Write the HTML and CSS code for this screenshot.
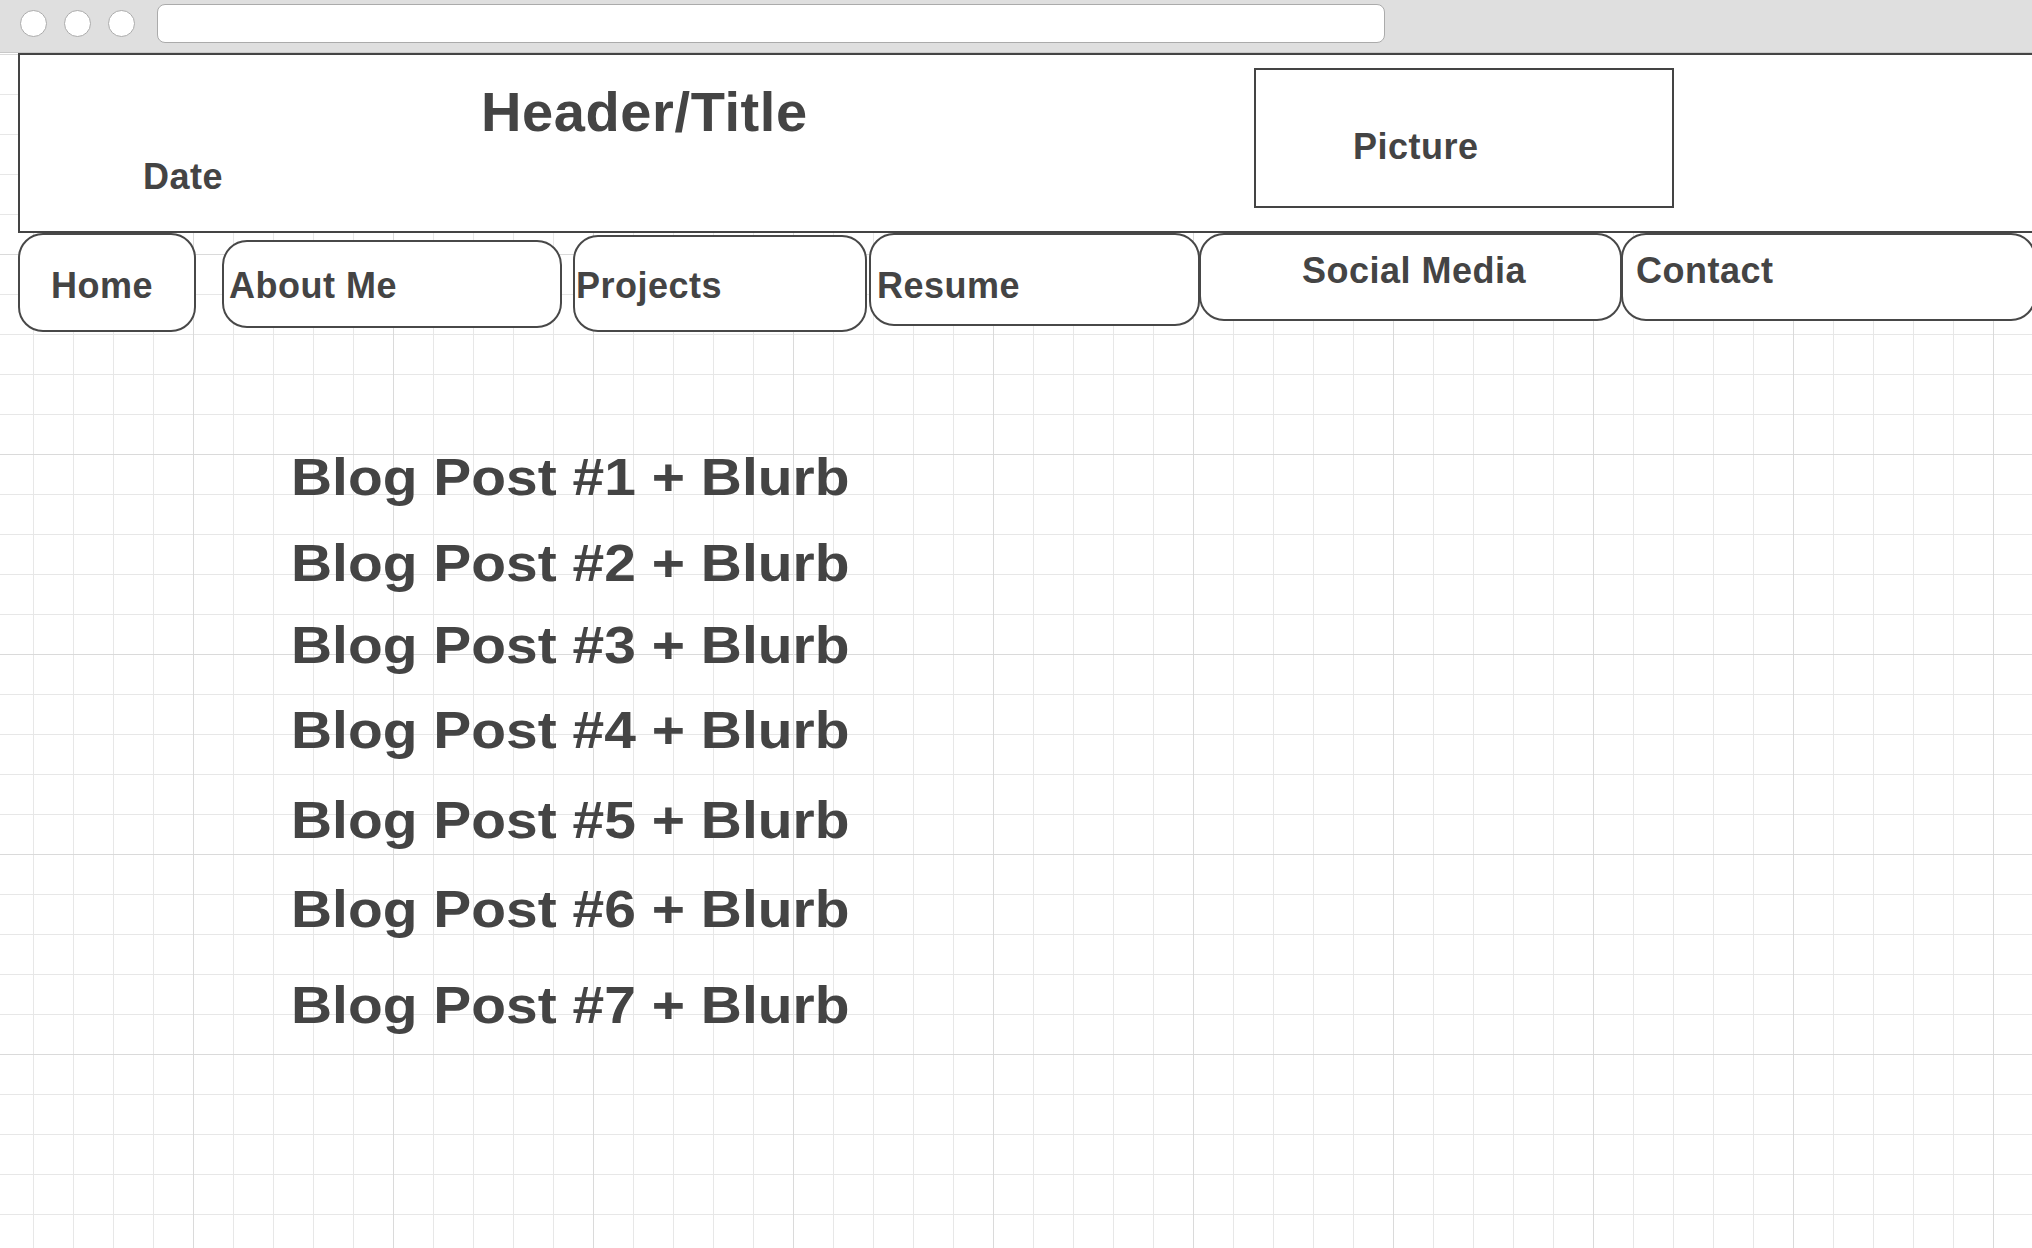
FILE: index.html
```html
<!DOCTYPE html>
<html lang="en">
<head>
<meta charset="utf-8">
<title>Blog Wireframe</title>
<link rel="stylesheet" href="styles.css">
</head>
<body>
<div class="page">
  <div class="chrome">
    <span class="dot"></span>
    <span class="dot"></span>
    <span class="dot"></span>
    <div class="urlbar"></div>
  </div>

  <header class="header">
    <div class="head-text">
      <h1 class="title">Header/Title</h1>
      <div class="date">Date</div>
    </div>
    <div class="picture">Picture</div>
  </header>

  <nav class="nav">
    <div class="tab tab-home">Home</div>
    <div class="tab tab-about">About Me</div>
    <div class="tab tab-projects">Projects</div>
    <div class="tab tab-resume">Resume</div>
    <div class="tab tab-social">Social Media</div>
    <div class="tab tab-contact">Contact</div>
  </nav>

  <main class="posts">
    <div class="post">Blog Post #1 + Blurb</div>
    <div class="post">Blog Post #2 + Blurb</div>
    <div class="post">Blog Post #3 + Blurb</div>
    <div class="post">Blog Post #4 + Blurb</div>
    <div class="post">Blog Post #5 + Blurb</div>
    <div class="post">Blog Post #6 + Blurb</div>
    <div class="post">Blog Post #7 + Blurb</div>
  </main>
</div>
</body>
</html>
```

FILE: styles.css
```css
* {
  box-sizing: border-box;
}

html, body {
  margin: 0;
  padding: 0;
  overflow: hidden;
}

body {
  font-family: "Liberation Sans", Arial, Helvetica, sans-serif;
  font-weight: bold;
  color: #444444;
}

.page {
  width: 100%;
  height: 100vh;
  overflow: hidden;
  background-color: #ffffff;
  background-image:
    linear-gradient(to right, #dadada 1px, transparent 1px),
    linear-gradient(to bottom, #dadada 1px, transparent 1px),
    linear-gradient(to right, #e7e7e7 1px, transparent 1px),
    linear-gradient(to bottom, #e7e7e7 1px, transparent 1px);
  background-size: 200px 100%, 100% 200px, 40px 100%, 100% 40px;
  background-position: 193px 0, 0 54px, 33px 0, 0 14px;
}

/* browser chrome */
.chrome {
  display: flex;
  align-items: flex-start;
  height: 53px;
  padding-left: 20px;
  background: #dfdfdf;
  border-bottom: 1px solid #c8c8c8;
}

.dot {
  flex: none;
  width: 27px;
  height: 27px;
  margin-top: 10px;
  margin-right: 17px;
  border: 1.5px solid #ababab;
  border-radius: 50%;
  background: #ffffff;
}

.urlbar {
  flex: none;
  width: 1228px;
  height: 39px;
  margin-top: 4px;
  margin-left: 5px;
  border: 1.5px solid #ababab;
  border-radius: 8px;
  background: #ffffff;
}

/* header */
.header {
  display: flex;
  align-items: flex-start;
  width: calc(100% + 10px);
  height: 180px;
  margin-left: 18px;
  border: 2px solid #444444;
  background: #ffffff;
}

.head-text {
  flex: none;
  width: 1234px;
  padding-left: 123px;
  padding-top: 29px;
}

.title {
  margin: 0 0 0 338px;
  font-size: 56px;
  line-height: 56px;
  font-weight: bold;
  letter-spacing: 0.6px;
}

.date {
  margin-top: 19px;
  font-size: 36px;
  line-height: 36px;
  letter-spacing: 0.5px;
}

.picture {
  flex: none;
  width: 420px;
  height: 140px;
  margin-top: 13px;
  padding-left: 97px;
  padding-top: 59px;
  border: 2px solid #444444;
  font-size: 36px;
  line-height: 36px;
  letter-spacing: 0.5px;
}

/* nav tabs */
.nav {
  display: flex;
  align-items: flex-start;
}

.tab {
  flex: none;
  border: 2px solid #484848;
  border-radius: 25px;
  background: #ffffff;
  font-size: 36px;
  line-height: 36px;
  letter-spacing: 0.5px;
  white-space: nowrap;
}

.tab-home {
  width: 178px;
  height: 99px;
  margin-left: 18px;
  padding: 33px 0 0 31px;
}

.tab-about {
  width: 340px;
  height: 88px;
  margin-left: 26px;
  margin-top: 7px;
  padding: 26px 0 0 5px;
}

.tab-projects {
  width: 294px;
  height: 97px;
  margin-left: 11px;
  margin-top: 2px;
  padding: 31px 0 0 1px;
}

.tab-resume {
  width: 331px;
  height: 93px;
  margin-left: 2px;
  padding: 33px 0 0 6px;
}

.tab-social {
  width: 423px;
  height: 88px;
  margin-left: -1px;
  padding: 18px 0 0 101px;
}

.tab-contact {
  width: 415px;
  height: 88px;
  margin-left: -1px;
  padding: 18px 0 0 13px;
}

/* blog posts */
.posts {
  display: flex;
  flex-direction: column;
  align-items: flex-start;
  padding-top: 115px;
  padding-left: 291px;
}

.post {
  font-size: 52px;
  line-height: 60px;
  white-space: nowrap;
  transform: scaleX(1.095);
  transform-origin: left center;
}

.post:nth-child(2) { margin-top: 26px; }
.post:nth-child(3) { margin-top: 22px; }
.post:nth-child(4) { margin-top: 25px; }
.post:nth-child(5) { margin-top: 30px; }
.post:nth-child(6) { margin-top: 29px; }
.post:nth-child(7) { margin-top: 36px; }
```
